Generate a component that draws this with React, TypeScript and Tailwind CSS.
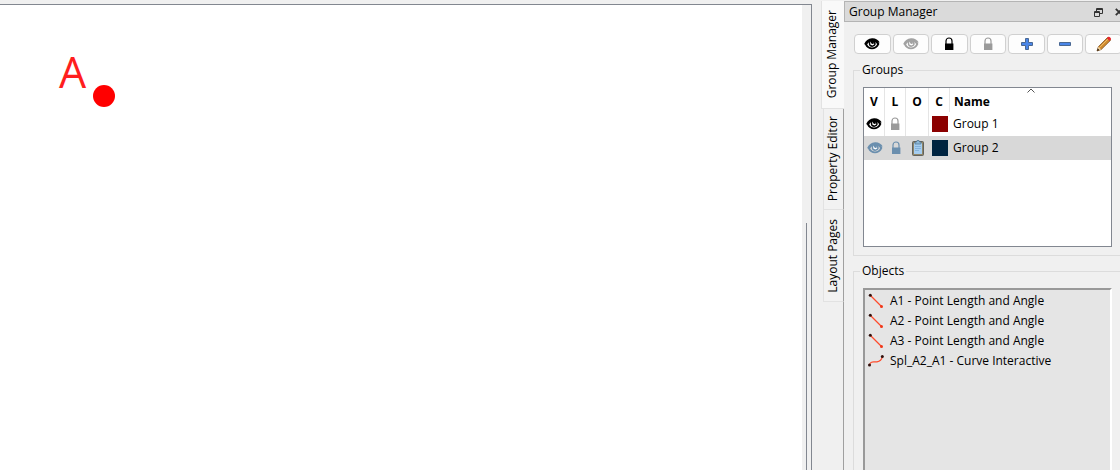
import { useState } from 'react';
import type { ReactNode } from 'react';

const tabs = [
  { name: 'Group Manager', size: 'h-27' },
  { name: 'Property Editor', size: 'h-[101px]' },
  { name: 'Layout Pages', size: 'h-[92px]' },
];

const objects = [
  { name: 'A1 - Point Length and Angle', type: 'line' },
  { name: 'A2 - Point Length and Angle', type: 'line' },
  { name: 'A3 - Point Length and Angle', type: 'line' },
  { name: 'Spl_A2_A1 - Curve Interactive', type: 'curve' },
];

function EyeIcon({ className = '' }: { className?: string }) {
  return (
    <svg className={`w-4 h-4 ${className}`} viewBox="0 0 16 16" fill="currentColor">
      <path
        fillRule="evenodd"
        d="M.2 8C1.500 4.800 4.400 2.500 8 2.300c3.500-.2 6.200 1.500 7.800 4.200l-1.300-.2.900 1.600C13.800 11.700 10.900 13.300 8 13.300c-3.200 0-5.600-1.600-6.900-4.500zM3.200 8.600C4.200 10.500 5.900 11.500 8 11.500s4-1.100 5-3c-.4-1.200-1-1.900-1.800-2.400.4.700.6 1.300.5 2-.2 1.800-1.700 2.800-3.500 2.800S4.900 9.600 4.800 7.900c0-.6.1-1.100.3-1.600C4.200 6.800 3.600 7.600 3.200 8.600z"
      />
      <path d="M6.200 5.600l1.400 1.800 2.300-1.500.3 2.500-1.900 1.200-2-1.200z" fill="white" />
      <circle cx="8.700" cy="6.800" r="1.200" />
    </svg>
  );
}

function LockIcon({ className = '' }: { className?: string }) {
  return (
    <svg className={`w-4 h-4 ${className}`} viewBox="0 0 16 16">
      <path d="M5 8V5a3 3 0 0 1 6 0v3" fill="none" stroke="currentColor" strokeWidth="1.2" />
      <path d="M4 7.500h8.400V14H4z" fill="currentColor" />
    </svg>
  );
}

function PlusIcon() {
  return (
    <svg className="w-4 h-4" viewBox="0 0 16 16">
      <path d="M6.500 2.500h3v4h4v3h-4v4h-3v-4h-4v-3h4z" fill="#4a86e8" stroke="#4a6892" />
    </svg>
  );
}

function MinusIcon() {
  return (
    <svg className="w-4 h-4" viewBox="0 0 16 16">
      <path d="M2.500 6.500h11v3h-11z" fill="#4a86e8" stroke="#4a6892" />
    </svg>
  );
}

function PencilIcon() {
  return (
    <svg className="w-4 h-4" viewBox="0 0 16 16">
      <path d="M1 15l1.400-4.300L11.500 1.500l3 2.800-9.300 9.200z" fill="#d08a2c" stroke="#7c5022" strokeWidth=".8" />
      <path d="M3.600 11.500l8.700-8.700" stroke="#f0c070" strokeWidth="1" />
      <path d="M10.800 2.200L12.300.8c1-.7 3.200 1.200 2.600 2.500l-1.300 1.600z" fill="#e8252b" />
      <path d="M2.400 10.700l2.800 2.800-1.800.6-1.600-1.500z" fill="#eed3a4" />
      <path d="M1 15l.8-2.400 1.600 1.500z" fill="#30261c" />
    </svg>
  );
}

function ClipboardIcon() {
  return (
    <svg className="w-4 h-4" viewBox="0 0 16 16">
      <rect x="2.500" y="1.500" width="11" height="14" rx="1" fill="#8f8568" stroke="#60625f" />
      <path d="M4 3h8v11H4z" fill="#a5cdf0" />
      <path d="M5 6.500h6M5 8.500h6M5 10.500h4" stroke="#84b2da" />
      <path d="M5 4V2h1.500L7 .5h2l.5 1.500H11v2z" fill="#8db8d9" stroke="#52738c" strokeWidth=".7" />
    </svg>
  );
}

function LineIcon() {
  return (
    <svg className="w-4 h-4" viewBox="0 0 16 16">
      <path d="M2 2l11.500 11.500" stroke="#ff4b2b" strokeWidth="1.200" />
      <circle cx="2.300" cy="2.300" r="1.500" fill="#32100c" />
      <circle cx="13.500" cy="13.500" r="1.500" fill="#f03818" />
    </svg>
  );
}

function CurveIcon() {
  return (
    <svg className="w-4 h-4" viewBox="0 0 16 16">
      <path d="M1.500 12C3 7.500 5.500 9.500 9 8.800c3-.5 4.500-1.500 5.300-5" fill="none" stroke="#ff4b2b" strokeWidth="1.200" />
      <circle cx="1.500" cy="12" r="1.500" fill="#32100c" />
      <circle cx="14.300" cy="3.500" r="1.500" fill="#32100c" />
    </svg>
  );
}

function ToolButton({ label, children }: { label: string; children: ReactNode }) {
  return (
    <button
      aria-label={label}
      className="flex-1 h-5 flex items-center justify-center rounded-sm border border-[#d0d0d0] bg-[#fdfdfd] hover:bg-white"
    >
      {children}
    </button>
  );
}

function GroupTable() {
  const head = 'border-r border-[#e5e5e5] pt-1 font-bold';
  const cell = 'border-r border-[#e5e5e5]';
  return (
    <div className="h-40 border border-[#828790] bg-white">
      <table className="w-full table-fixed border-separate border-spacing-0">
        <colgroup>
          <col className="w-[21px]" />
          <col className="w-[21px]" />
          <col className="w-[23px]" />
          <col className="w-[21px]" />
          <col />
        </colgroup>
        <thead>
          <tr className="h-6">
            <th className={head}>V</th>
            <th className={head}>L</th>
            <th className={head}>O</th>
            <th className={head}>C</th>
            <th className="relative pl-1 pt-1 text-left font-bold">
              Name
              <svg className="absolute left-1/2 top-0 w-2 h-1.5 -translate-x-1" viewBox="0 0 8 6">
                <path d="M.5 4.500L4 1l3.500 3.500" fill="none" stroke="#555" />
              </svg>
            </th>
          </tr>
        </thead>
        <tbody>
          <tr className="h-6">
            <td className={cell}><EyeIcon className="mx-auto text-black" /></td>
            <td className={cell}><LockIcon className="mx-auto text-[#9a9a9a]" /></td>
            <td className={cell}></td>
            <td><div className="mx-auto size-4 bg-[#8b0000]" /></td>
            <td className="pl-[3px]">Group 1</td>
          </tr>
          <tr className="h-6 bg-[#d8d8d8]">
            <td><EyeIcon className="mx-auto text-[#6b8fae]" /></td>
            <td><LockIcon className="mx-auto text-[#6b8fae]" /></td>
            <td><div className="flex justify-center"><ClipboardIcon /></div></td>
            <td><div className="mx-auto size-4 bg-[#002440]" /></td>
            <td className="pl-[3px]">Group 2</td>
          </tr>
        </tbody>
      </table>
    </div>
  );
}

export default function App() {
  const [active, setActive] = useState('Group Manager');

  return (
    <div className="flex h-screen overflow-hidden bg-[#f0f0f0] font-['Open_Sans','Noto_Sans',sans-serif] text-xs text-black">
      {/* Drawing area */}
      <main className="mt-1 flex flex-1 min-w-0 border-t border-r border-[#828790]">
        <svg className="flex-1 min-w-0 h-full bg-white">
          <text x="59" y="83" fontSize="43" fill="#ff1e1e">A</text>
          <circle cx="104" cy="91" r="11" fill="#ff0000" />
        </svg>
        <div className="w-[9px] pl-1 pt-[218px]">
          <div className="h-full w-px bg-[#828790]" />
        </div>
      </main>

      {/* Dock tabs */}
      <div role="tablist" className="flex w-8 flex-col pl-[9px] pt-px">
        {tabs.map((tab) => (
          <button
            key={tab.name}
            role="tab"
            aria-selected={active === tab.name}
            onClick={() => setActive(tab.name)}
            className={`${tab.size} flex shrink-0 items-center justify-center border-b border-l border-[#e2e2e2] ${
              active === tab.name
                ? 'bg-[#f9f9f9] pr-0.5'
                : 'ml-0.5 border-r border-r-[#a0a0a0] bg-[#f2f2f2] pr-0.5'
            }`}
          >
            <span className="rotate-180 whitespace-nowrap [writing-mode:vertical-rl]">{tab.name}</span>
          </button>
        ))}
        <div className="flex-1 border-r border-[#a0a0a0]" />
      </div>

      {/* Group manager dock */}
      <aside className="flex w-69 shrink-0 flex-col overflow-hidden pt-px">
        <header className="-mr-1 flex h-[21px] shrink-0 items-center border border-[#b4b4b4] bg-[#dadada] pl-1 pt-px">
          <h1 className="flex-1">Group Manager</h1>
          <button aria-label="Float" className="mr-3">
            <svg className="w-[9px] h-[9px]" viewBox="0 0 9 9" fill="none" stroke="#333">
              <path d="M2.500 3V.5h6v5H6M2 1.500h6.500M.5 3.500h5v5h-5zM.5 4.500h5" />
            </svg>
          </button>
          <button aria-label="Close">
            <svg className="w-2 h-2" viewBox="0 0 8 8" stroke="#333" strokeWidth="1.800">
              <path d="M.8.8l6.400 6.400M7.200.8L.8 7.200" />
            </svg>
          </button>
        </header>

        <div className="-mr-0.5 mt-3 flex shrink-0 gap-0.5 pl-2.5">
          <ToolButton label="Show all"><EyeIcon /></ToolButton>
          <ToolButton label="Hide all"><EyeIcon className="text-[#a2a2a2]" /></ToolButton>
          <ToolButton label="Lock all"><LockIcon /></ToolButton>
          <ToolButton label="Unlock all"><LockIcon className="text-[#9a9a9a]" /></ToolButton>
          <ToolButton label="Add group"><PlusIcon /></ToolButton>
          <ToolButton label="Remove group"><MinusIcon /></ToolButton>
          <ToolButton label="Edit group"><PencilIcon /></ToolButton>
        </div>

        <fieldset className="ml-[9px] mt-[7px] shrink-0 border border-r-0 border-[#dcdcdc] pb-2 pl-[9px] pr-2">
          <legend className="-ml-[3px] px-0.5 leading-[18px]">Groups</legend>
          <div className="pt-2">
            <GroupTable />
          </div>
        </fieldset>

        <fieldset className="ml-[9px] mt-1.5 flex-1 border border-r-0 border-b-0 border-[#dcdcdc] pl-[9px] pr-2">
          <legend className="-ml-[3px] px-0.5 leading-[18px]">Objects</legend>
          <div className="h-full pt-2">
            <ul className="h-full border-t-2 border-l-2 border-r-2 border-t-[#999] border-l-[#999] border-r-white bg-[#e5e5e5] pl-[3px] pt-px">
              {objects.map((obj) => (
                <li key={obj.name} className="flex h-5 items-center gap-1.5 whitespace-nowrap">
                  {obj.type === 'line' ? <LineIcon /> : <CurveIcon />}
                  {obj.name}
                </li>
              ))}
            </ul>
          </div>
        </fieldset>
      </aside>
    </div>
  );
}
